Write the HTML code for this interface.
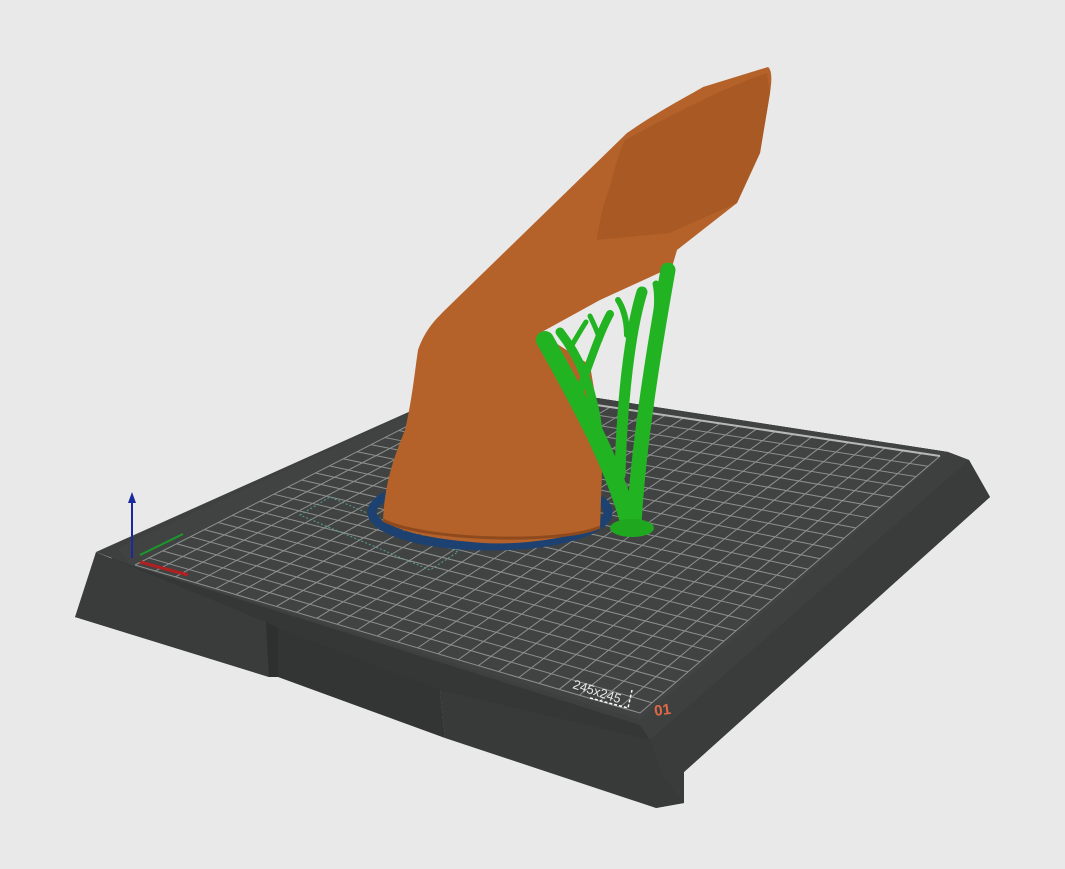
<!DOCTYPE html>
<html><head><meta charset="utf-8"><style>
html,body{margin:0;padding:0;background:#e9e9e9;width:1065px;height:869px;overflow:hidden}
svg{display:block}
</style></head><body>
<svg id="s" width="1065" height="869" viewBox="0 0 1065 869" xmlns="http://www.w3.org/2000/svg">
<rect width="1065" height="869" fill="#e9e9e9"/>
<!-- base -->
<polygon points="118,548 480,380 948,452 969,460 990,497 684,772 684,803 656,808 640,742 445,738 440,690 278,677 269,677 75,617" fill="#353737"/>
<polygon points="75,617 96,552 266,622 269,677" fill="#3a3c3c"/>
<polygon points="266,622 278,628 278,677 269,677" fill="#2e3030"/>
<polygon points="278,628 440,690 445,738 278,677" fill="#333535"/>
<polygon points="440,690 650,740 662,775 684,803 656,808 445,738" fill="#383a3a"/>
<polygon points="650,740 969,460 990,497 684,772 684,803 662,775" fill="#3a3c3c"/>
<!-- top surface -->
<polygon points="96,552 480,380 948,452 969,460 650,740 640,725 130,565" fill="#3e4040"/>
<polygon points="118,548 480,380 948,452 640,720 130,565" fill="#414343"/>
<g id="grid" stroke="#8e9090" stroke-width="1" fill="none"></g>
<polyline points="482,388 940,456" stroke="#b8b8b8" stroke-width="2" fill="none"/>
<polygon points="300,515 330,497 458,552 430,570" fill="none" stroke="#5aa090" stroke-width="1" stroke-dasharray="2,2"/>
<text x="572" y="688" fill="#e8e8e8" font-family="Liberation Sans, sans-serif" font-size="13" transform="rotate(18 572 688)">245x245</text>
<polyline points="590,698 628,708 632,690" stroke="#fff" stroke-width="1.5" fill="none" stroke-dasharray="3,2"/>
<text x="655" y="716" fill="#e06a45" font-family="Liberation Sans, sans-serif" font-size="15" font-weight="bold" transform="rotate(-8 655 716)">01</text>
<!-- axes -->
<line x1="132" y1="558" x2="132" y2="500" stroke="#1a2a9a" stroke-width="2"/>
<polygon points="128,503 136,503 132,492" fill="#1a2a9a"/>
<line x1="140" y1="562" x2="188" y2="575" stroke="#b02020" stroke-width="3"/>
<line x1="140" y1="555" x2="183" y2="534" stroke="#1a9a2a" stroke-width="2"/>
<!-- raft ring -->
<ellipse cx="490" cy="512" rx="118" ry="34" fill="none" stroke="#1d4170" stroke-width="9"/>
<!-- orange body -->
<path d="M768,67 C772,70 772,80 770,93 L760,153 L737,203 L677,250 L672,267 L600,300 L540,333 L590,365 L603,443 L600,527 C560,540 520,545 483,543 C440,540 400,533 383,520 C385,480 395,455 405,430 C412,400 415,370 418,350 C425,330 435,320 445,310 L627,133 C660,110 690,95 703,87 Z" fill="#b5622a"/>
<path d="M597,240 C600,215 605,200 610,187 C615,165 620,150 625,140 C680,110 730,85 767,73 L770,93 L760,153 L737,203 L670,233 Z" fill="#a95a24"/>
<path d="M383,520 C420,540 560,545 600,527" fill="none" stroke="#8e4a1c" stroke-width="3"/>
<!-- green supports -->
<g stroke="#22b322" stroke-linecap="round" fill="none">
<path d="M630,525 C615,470 590,420 545,340" stroke-width="18"/>
<path d="M634,525 C638,450 652,360 668,270" stroke-width="15"/>
<path d="M620,475 C622,400 630,330 642,292" stroke-width="11"/>
<path d="M598,430 C592,385 578,355 560,332" stroke-width="9"/>
<path d="M578,395 C590,362 600,332 610,314" stroke-width="8"/>
<path d="M650,360 C656,322 660,300 656,284" stroke-width="7"/>
<path d="M627,335 C627,318 622,306 618,300" stroke-width="6"/>
<path d="M572,345 C578,335 582,328 586,322" stroke-width="5"/>
<path d="M600,340 C596,328 592,320 590,316" stroke-width="5"/>
</g>
<ellipse cx="632" cy="528" rx="22" ry="9" fill="#1fa81f"/>
</svg>
<script>
var g=document.getElementById('grid');
var A=[135,565],B=[482,388],C=[940,456],D=[640,713],N=25;
function L(p,q,t){return [p[0]+(q[0]-p[0])*t,p[1]+(q[1]-p[1])*t];}
var s='';
for(var i=0;i<=N;i++){var t=i/N;
var p=L(A,B,t),q=L(D,C,t);s+='<line x1="'+p[0]+'" y1="'+p[1]+'" x2="'+q[0]+'" y2="'+q[1]+'"/>';
p=L(A,D,t);q=L(B,C,t);s+='<line x1="'+p[0]+'" y1="'+p[1]+'" x2="'+q[0]+'" y2="'+q[1]+'"/>';}
g.innerHTML=s;
</script>
</body></html>
